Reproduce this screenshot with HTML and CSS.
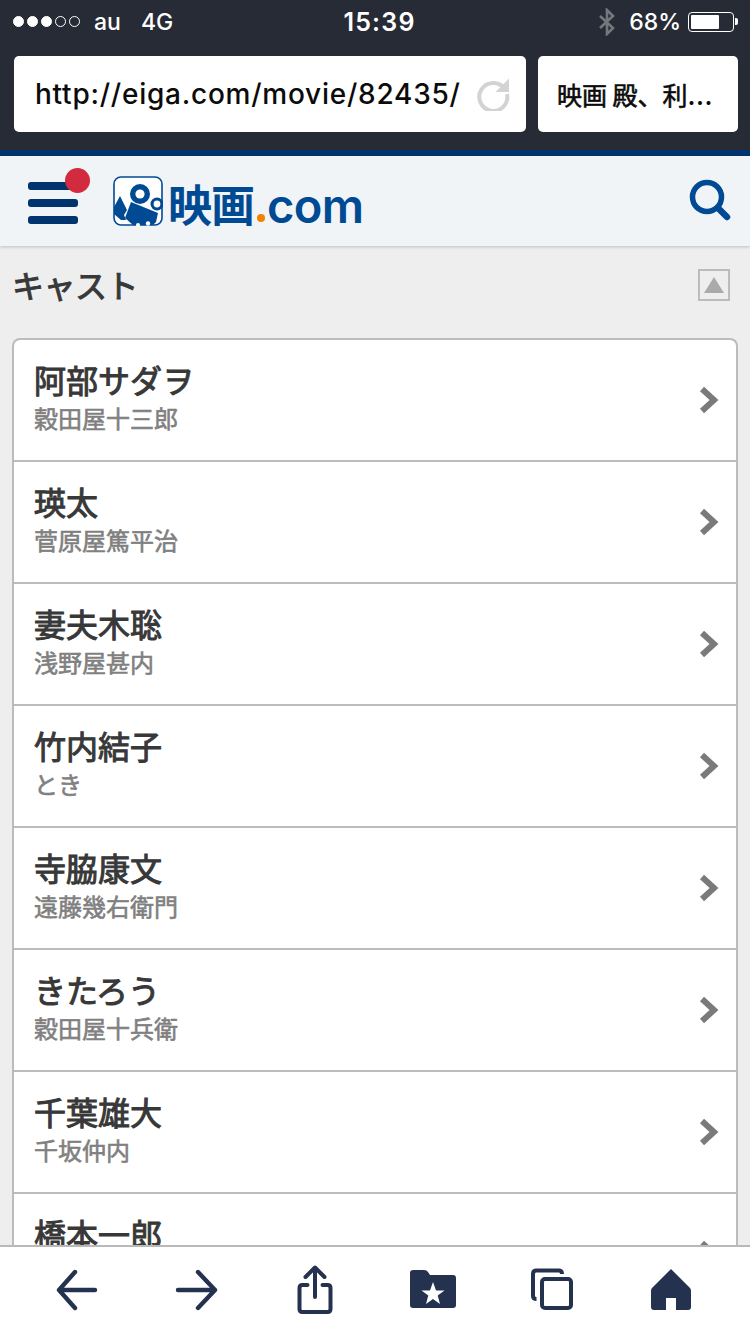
FILE: index.html
```html
<!DOCTYPE html>
<html lang="ja">
<head>
<meta charset="utf-8">
<title>キャスト</title>
<link rel="stylesheet" href="styles.css">
</head>
<body>
<div class="screen">
  <div class="chrome">
    <div class="status">
      <div class="status-left">
        <span class="dots"><i class="dot on"></i><i class="dot on"></i><i class="dot on"></i><i class="dot"></i><i class="dot"></i></span>
        <span class="carrier">au</span>
        <span class="net">4G</span>
      </div>
      <div class="clock">15:39</div>
      <div class="status-right">
        <svg class="bt" width="18" height="28" viewBox="0 0 18 28"><path d="M2 8 L15 20 L9 26 V2 L15 8 L2 20" fill="none" stroke="#75777e" stroke-width="2.6"/></svg>
        <span class="pct">68%</span>
        <span class="battery"><span class="battery-fill"></span></span><span class="battery-tip"></span>
      </div>
    </div>
    <div class="tabs">
      <div class="url-box">
        <span class="url">http://eiga.com/movie/82435/</span>
        <svg class="reload" width="34" height="34" viewBox="0 0 34 34"><path d="M28.5 11.5 A14 14 0 1 0 31 17" fill="none" stroke="#d3d3d3" stroke-width="4"/><path d="M33 1.5 V15 H19.5 Z" fill="#d3d3d3"/></svg>
      </div>
      <div class="tab-box">映画 殿、利<span class="ell">...</span></div>
    </div>
  </div>
  <header class="site-header">
    <div class="menu">
      <span class="bar"></span><span class="bar"></span><span class="bar"></span>
      <span class="badge"></span>
    </div>
    <div class="logo">
      <svg class="logo-mark" width="50" height="50" viewBox="0 0 50 50">
        <rect x="1" y="1" width="48" height="48" rx="7" fill="#fff" stroke="#004a94" stroke-width="1.6"/>
        <path d="M1 31 L7 20 L14 34 L11 39 L13 44 L8 44 L1 38 Z" fill="#004a94"/>
        <circle cx="27" cy="18" r="10" fill="#004a94"/><circle cx="27" cy="18" r="4.6" fill="#fff"/>
        <circle cx="44" cy="28" r="6.5" fill="#004a94"/><circle cx="44" cy="28" r="3.4" fill="#fff"/>
        <path d="M18 26 L45 37 L43 46 L40 49 L20 49 L12 42 Z" fill="#004a94"/>
        <circle cx="25" cy="49" r="2" fill="#fff"/><circle cx="35" cy="47.5" r="2.2" fill="#fff"/>
      </svg>
      <span class="logo-ja">映画</span><span class="logo-dot"></span><span class="logo-en">com</span>
    </div>
    <svg class="search" width="44" height="44" viewBox="0 0 44 44"><circle cx="19" cy="18" r="14.5" fill="none" stroke="#004a94" stroke-width="5.5"/><path d="M30 29 L39 38" stroke="#004a94" stroke-width="6.5" stroke-linecap="round"/></svg>
  </header>
  <main class="content">
    <div class="section-head">
      <h2 class="section-title">キャスト</h2>
      <span class="collapse"><span class="tri"></span></span>
    </div>
    <ul class="list">
      <li class="row"><div><div class="name">阿部サダヲ</div><div class="role">穀田屋十三郎</div></div><svg class="chev" width="20" height="28" viewBox="0 0 20 28"><path d="M3 3 L15 14 L3 25" fill="none" stroke="#7a7a7a" stroke-width="6"/></svg></li>
      <li class="row"><div><div class="name">瑛太</div><div class="role">菅原屋篤平治</div></div><svg class="chev" width="20" height="28" viewBox="0 0 20 28"><path d="M3 3 L15 14 L3 25" fill="none" stroke="#7a7a7a" stroke-width="6"/></svg></li>
      <li class="row"><div><div class="name">妻夫木聡</div><div class="role">浅野屋甚内</div></div><svg class="chev" width="20" height="28" viewBox="0 0 20 28"><path d="M3 3 L15 14 L3 25" fill="none" stroke="#7a7a7a" stroke-width="6"/></svg></li>
      <li class="row"><div><div class="name">竹内結子</div><div class="role">とき</div></div><svg class="chev" width="20" height="28" viewBox="0 0 20 28"><path d="M3 3 L15 14 L3 25" fill="none" stroke="#7a7a7a" stroke-width="6"/></svg></li>
      <li class="row"><div><div class="name">寺脇康文</div><div class="role">遠藤幾右衛門</div></div><svg class="chev" width="20" height="28" viewBox="0 0 20 28"><path d="M3 3 L15 14 L3 25" fill="none" stroke="#7a7a7a" stroke-width="6"/></svg></li>
      <li class="row"><div><div class="name">きたろう</div><div class="role">穀田屋十兵衛</div></div><svg class="chev" width="20" height="28" viewBox="0 0 20 28"><path d="M3 3 L15 14 L3 25" fill="none" stroke="#7a7a7a" stroke-width="6"/></svg></li>
      <li class="row"><div><div class="name">千葉雄大</div><div class="role">千坂仲内</div></div><svg class="chev" width="20" height="28" viewBox="0 0 20 28"><path d="M3 3 L15 14 L3 25" fill="none" stroke="#7a7a7a" stroke-width="6"/></svg></li>
      <li class="row"><div><div class="name">橋本一郎</div><div class="role">&nbsp;</div></div><svg class="chev" width="20" height="28" viewBox="0 0 20 28"><path d="M3 3 L15 14 L3 25" fill="none" stroke="#7a7a7a" stroke-width="6"/></svg></li>
    </ul>
  </main>
  <nav class="toolbar">
    <svg width="44" height="44" viewBox="0 0 44 44"><path d="M4 22 H40 M20 4 L4 22 L20 40" fill="none" stroke="#24324f" stroke-width="4.4" stroke-linecap="round" stroke-linejoin="round"/></svg>
    <svg width="44" height="44" viewBox="0 0 44 44"><path d="M41 22 H4 M24 4 L41 22 L24 40" fill="none" stroke="#24324f" stroke-width="4.4" stroke-linecap="round" stroke-linejoin="round"/></svg>
    <svg width="44" height="50" viewBox="0 0 44 50"><path d="M22 32 V3 M12.5 12 L22 2.5 L31.5 12 M14.5 20 H9.500 Q6.500 20 6.500 23 V44 Q6.500 47 9.500 47 H34.500 Q37.500 47 37.500 44 V23 Q37.500 20 34.500 20 H29.500" fill="none" stroke="#24324f" stroke-width="4" stroke-linecap="round" stroke-linejoin="round"/></svg>
    <svg width="48" height="44" viewBox="0 0 48 44"><path d="M1 5 Q1 2 4 2 H15 Q18 2 19 4 L21 7 H44 Q47 7 47 10 V37 Q47 40 44 40 H4 Q1 40 1 37 Z" fill="#24324f"/><path d="M24 14 L27 22.500 H35.500 L28.700 27.500 L31 36 L24 31 L17 36 L19.300 27.500 L12.500 22.500 H21 Z" fill="#fff"/></svg>
    <svg width="42" height="44" viewBox="0 0 42 44"><path d="M5.500 31 Q2 31 2 28 V6 Q2 2.500 5 2.500 H28 Q31 2.500 31 6" fill="none" stroke="#24324f" stroke-width="4"/><rect x="11" y="11" width="29" height="29" rx="3" fill="none" stroke="#24324f" stroke-width="4"/></svg>
    <svg width="42" height="44" viewBox="0 0 42 44"><path d="M21 1 L40 20 Q41 21 41 23 V39 Q41 42 38 42 H26 V30 H16 V42 H4 Q1 42 1 39 V23 Q1 21 2 20 Z" fill="#24324f"/></svg>
  </nav>
</div>
</body>
</html>
```

FILE: styles.css
```css
* { box-sizing: border-box; }
html, body { margin: 0; padding: 0; }
body { font-family: "Noto Sans CJK JP", "Noto Sans", sans-serif; background: #eee; }
.screen { width: 750px; height: 1334px; display: flex; flex-direction: column; overflow: hidden; }

.chrome { height: 156px; flex: none; background: #272b35; border-bottom: 6px solid #00346f; }
.status { height: 56px; display: grid; grid-template-columns: 1fr auto 1fr; align-items: center; padding: 0 12px 13px 13px; color: #fff; font-family: Inter, sans-serif; font-size: 23px; font-weight: 500; }
.status-left { display: flex; align-items: center; }
.dots { display: flex; gap: 3px; margin-right: 14px; }
.dot { width: 11px; height: 11px; border-radius: 50%; border: 1px solid #fff; }
.dot.on { background: #fff; }
.carrier { margin-right: 20px; }
.clock { font-weight: 600; font-size: 25px; letter-spacing: 1.2px; margin-left: 8px; }
.status-right { display: flex; align-items: center; justify-content: flex-end; }
.bt { margin-right: 13px; }
.pct { margin-right: 7px; }
.battery { width: 46px; height: 20px; border: 1px solid #fff; border-radius: 4px; padding: 2px; display: block; }
.battery-fill { display: block; width: 28px; height: 14px; background: #fff; border-radius: 1px; }
.battery-tip { width: 3px; height: 7px; background: #fff; border-radius: 0 2px 2px 0; margin-left: 1px; }

.tabs { display: flex; gap: 12px; padding: 0 12px 0 14px; }
.url-box, .tab-box { height: 76px; background: #fff; border-radius: 5px; display: flex; align-items: center; color: #0b0b0b; }
.url-box { width: 512px; padding: 0 16px 0 21px; justify-content: space-between; }
.url { font-family: Inter, sans-serif; font-weight: 500; font-size: 28px; letter-spacing: .76px; white-space: nowrap; }
.tab-box { width: 200px; padding-left: 19px; font-size: 25px; font-weight: 400; -webkit-text-stroke: .6px #0b0b0b; white-space: nowrap; }
.ell { font-family: Inter, sans-serif; font-weight: 600; letter-spacing: .5px; padding-top: 4px; -webkit-text-stroke: 0; }

.site-header { height: 90px; flex: none; background: #f1f4f6; display: flex; align-items: center; padding: 0 18px 0 28px; box-shadow: 0 1px 3px rgba(0,0,0,.2); position: relative; }
.menu { position: relative; width: 50px; display: flex; flex-direction: column; gap: 9px; margin-right: 35px; padding-top: 4px; }
.bar { display: block; height: 8px; background: #00346f; border-radius: 3px; }
.badge { position: absolute; top: -10px; left: 37px; width: 25px; height: 25px; border-radius: 50%; background: #d22a3e; }
.logo { display: flex; align-items: center; color: #004a94; line-height: 1; flex: 1; }
.logo-mark { margin-right: 5px; }
.logo-ja { font-size: 44px; font-weight: 700; letter-spacing: -1px; margin-top: 3px; }
.logo-dot { width: 8px; height: 8px; border-radius: 50%; background: #f08300; align-self: flex-end; margin: 0 2px 7px 3px; }
.logo-en { font-family: Inter, sans-serif; font-size: 47px; font-weight: 600; letter-spacing: -.6px; margin-top: 9px; }

.content { flex: 1; min-height: 0; overflow: hidden; padding: 0 12px; }
.section-head { height: 92px; display: flex; align-items: center; justify-content: space-between; padding: 0 0 16px; }
.section-title { margin: 0; font-size: 32px; font-weight: 400; -webkit-text-stroke: 1px #383838; color: #383838; letter-spacing: -.5px; }
.collapse { width: 32px; height: 32px; border: 2px solid #bcbcbc; background: #eee; display: flex; align-items: center; justify-content: center; margin-right: 8px; position: relative; top: 1px; }
.tri { width: 0; height: 0; border-left: 10px solid transparent; border-right: 10px solid transparent; border-bottom: 16px solid #aaa; }

.list { list-style: none; margin: 0; padding: 0; background: #fff; border: 2px solid #bcbcbc; border-radius: 8px 8px 0 0; border-bottom: 0; }
.row { height: 122px; border-bottom: 2px solid #bcbcbc; display: flex; align-items: center; justify-content: space-between; padding: 0 17px 0 20px; }
.name { font-size: 32px; font-weight: 400; -webkit-text-stroke: 1px #383838; color: #383838; line-height: 44px; }
.role { font-size: 24px; font-weight: 400; -webkit-text-stroke: .6px #808080; color: #808080; line-height: 34px; }
.row > div { margin-top: -8px; }

.toolbar { height: 89px; flex: none; background: #fff; border-top: 2px solid #b9b9b9; display: grid; grid-template-columns: repeat(6, 118.8px); justify-items: center; align-items: center; padding: 0 0 2px 17.6px; }
```
